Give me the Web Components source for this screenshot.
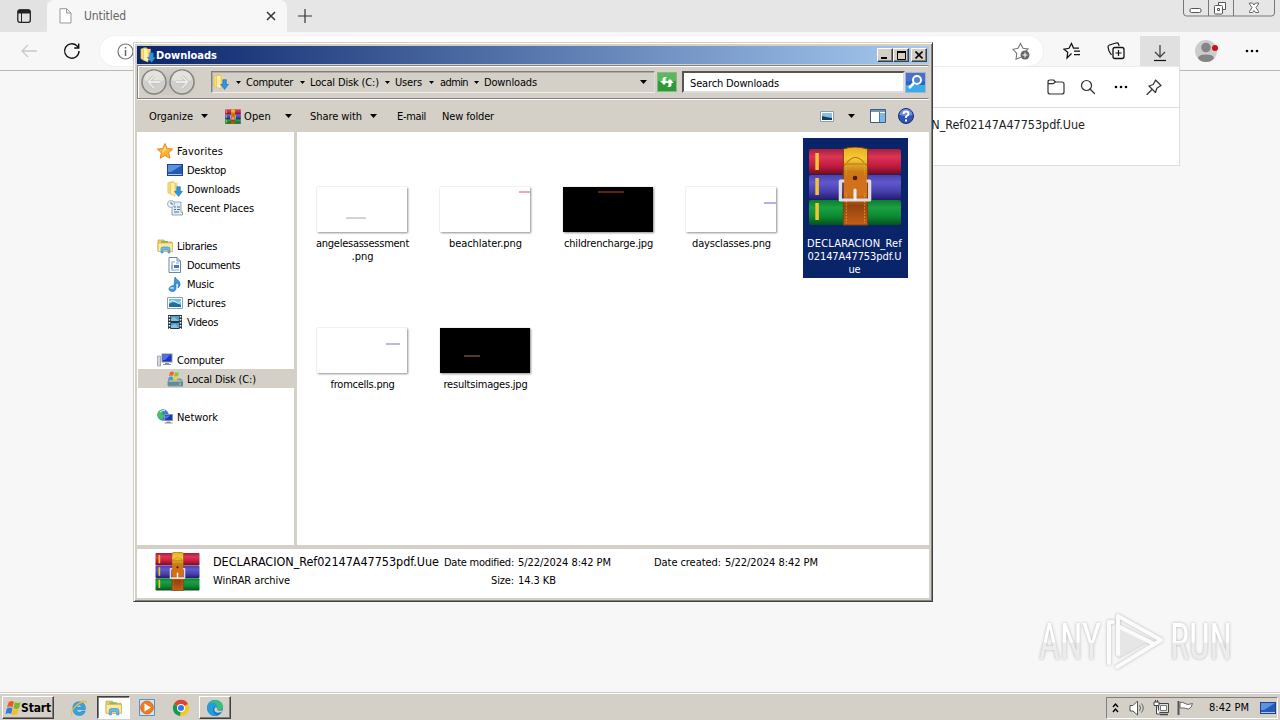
<!DOCTYPE html>
<html lang="en"><head><meta charset="utf-8"><title>Downloads</title>
<style>
html,body{margin:0;width:1280px;height:720px;overflow:hidden}
body{font:11px/13px "DejaVu Sans Condensed","DejaVu Sans","Liberation Sans",sans-serif;font-stretch:condensed;color:#000}
</style></head><body>
<desktop-shell></desktop-shell>
<script>
const folder='<path d="M1 2l6-1.500v14l-6-2z" fill="#f9dc7b" stroke="#d9ad3d" stroke-width=".6"/><path d="M3 2h9v12H3z" fill="#f6d676"/><path d="M4 1l5 1v14l-5-2z" fill="#fff0a9" stroke="#dfb64b" stroke-width=".6"/>';
const lib='<path d="M1 2h6l1 2h7v9H1z" fill="#f3ce68" stroke="#c79a35" stroke-width=".7"/><path d="M4 3h7v3H4z" fill="#7fbf66"/><path d="M1 5h14.500v8.500H1z" fill="#fbe9a0" stroke="#d3ab4a" stroke-width=".7"/><path d="M4 15v-4q0-2 2-2h5q2 0 2 2v4h-2v-3H6v3z" fill="#6db8e8" stroke="#3b87bd" stroke-width=".6"/>';
const mon=(x,y,w,h)=>`<rect x="${x}" y="${y}" width="${w}" height="${h}" fill="#1c36c4" stroke="#8b93a5"/><path d="M${x+1} ${y+1}h${w-3}l-${w/2} ${h-3}h-2z" fill="#4c72ee"/><path d="M${x+w/2-2} ${y+h+1}h4v1h2v1h-8v-1h2z" fill="#8b8f96"/>`;
const rar=`<defs><linearGradient id="r" x2="0" y2="1"><stop stop-color="#a3203c"/><stop offset=".3" stop-color="#dd3556"/><stop offset=".65" stop-color="#c41c40"/><stop offset="1" stop-color="#6c0d24"/></linearGradient><linearGradient id="b" x2="0" y2="1"><stop stop-color="#4a42ac"/><stop offset=".3" stop-color="#6057cc"/><stop offset=".65" stop-color="#4a41b0"/><stop offset="1" stop-color="#251d70"/></linearGradient><linearGradient id="g" x2="0" y2="1"><stop stop-color="#0f7a2e"/><stop offset=".3" stop-color="#1ba044"/><stop offset=".65" stop-color="#0c8a31"/><stop offset="1" stop-color="#055020"/></linearGradient><linearGradient id="o" x2="0" y2="1"><stop stop-color="#e9ad18"/><stop offset=".15" stop-color="#f6cb38"/><stop offset=".32" stop-color="#c77a16"/><stop offset=".6" stop-color="#d9761a"/><stop offset=".75" stop-color="#94430d"/><stop offset="1" stop-color="#c35f19"/></linearGradient></defs>
<rect x="1" y="2" width="91" height="25.500" rx="2" fill="url(#r)"/><rect x="1" y="28" width="91" height="24.500" rx="2" fill="url(#b)"/><rect x="1" y="53" width="91" height="25" rx="2" fill="url(#g)"/><path d="M9 6v17M9 31v17M9 56v17" stroke="#f3c332" stroke-width="3.500"/><path d="M35 2q11-4 24 0v76H35z" fill="url(#o)" stroke="#7d430d" stroke-width="1"/><path d="M36 19q11-17 22 0M36 17h22" fill="none" stroke="#b8760f" stroke-width="1"/><path d="M38 3v73M56 3v73" stroke="#f0ad41" stroke-width=".6" stroke-dasharray="2 1"/><path d="M36 34h-4v19h29V34h-4" fill="none" stroke="#dcdce2" stroke-width="3.200" stroke-linejoin="round"/><path d="M36 28h22v17q-11 8-22 0z" fill="#d3711a"/><circle cx="46.500" cy="31" r="2.300" fill="#492004"/><path d="M46.500 43v9" stroke="#f2f2f5" stroke-width="3" stroke-linecap="round"/>`;
const dl=folder+'<path d="M11 6h4v5h2.500L13 16.500 8.500 11H11z" fill="#2d96e2" stroke="#176bb0" stroke-width=".6"/>';
const S='fill="none" stroke="#333" stroke-width="1.200" stroke-linecap="round" stroke-linejoin="round"';
const ICONS={
 downloads:['0 0 18 17',dl],rar:['0 0 93 79',rar],libraries:['0 0 16 16',lib],
 star:['0 0 16 16','<path d="M8 .5l2.300 5 5.400.6-4 3.700 1.200 5.500L8 12.500l-4.800 2.800 1.100-5.500-4-3.700 5.400-.6z" fill="#ffb52e" stroke="#d9761c" stroke-width=".8"/><path d="M8 3l1.500 3.500L5 10z" fill="#ffe08a"/>'],
 desktop:['0 0 16 16','<path d="M0 2h16v12H0z" fill="#20418f"/><path d="M1 3h14v9H1z" fill="#2459b4"/><path d="M1 3h14L4 10H1z" fill="#5a94df"/><path d="M1 12.500h14" stroke="#a7c6ee"/>'],
 recent:['0 0 16 16','<path d="M4 2h10v10h1.500v3H5V5H3z" fill="#e4eef6" stroke="#7d8fa1" stroke-width=".8"/><circle cx="4" cy="4" r="3.500" fill="#eef4fa" stroke="#899ab0" stroke-width=".8"/><path d="M4 2v2h2M7 7h2m1 0h3M7 9.500h2m1 0h3M7 12h5" stroke="#50719a" fill="none"/>'],
 document:['0 0 16 16','<path d="M2 .5h8l3.500 3.500v11.500H2z" fill="#fff" stroke="#6e87a5"/><path d="M10 .5V4h3.500" fill="none" stroke="#6e87a5"/><path d="M4 5h4M4 7h2m3-1h3M4 13h8" stroke="#7ba0cc"/><path d="M7 8h5v3H7z" fill="#387cc4"/><path d="M4 9h2m-2 2h2" stroke="#555"/>'],
 music:['0 0 16 16','<path d="M8 1c1 3 5 3 5 7 0 2-1 3-2 4 1-3 0-5-2-5v5c0 5-7 4-7 1 0-2 3-4 5-3z" fill="#3a99dc" stroke="#1b6fb3" stroke-width=".7"/><ellipse cx="5" cy="12" rx="2" ry="1" fill="#a9dafa"/>'],
 pictures:['0 0 16 16','<path d="M.5 2.500h15v11H.5z" fill="#fff" stroke="#8aa3b9"/><path d="M2 4h12v8H2z" fill="#70bfe8"/><path d="M2 9q5-4 12 1v2H2z" fill="#256f96"/><path d="M2 7q4-3 7 0t5-1" fill="none" stroke="#e4f6ff"/>'],
 videos:['0 0 16 16','<path d="M1 1h14v14H1z" fill="#2c343f"/><path d="M4 2h8v5H4zM4 9h8v5H4z" fill="#4f9ed0"/><path d="M4 5l3-2 5 4H4zM4 12l4-2 4 4H4z" fill="#7bc1e6"/><path d="M2.500 2v13M13.500 2v13" stroke="#fff" stroke-width="1.500" stroke-dasharray="1.500 1.500"/>'],
 computer:['0 0 16 16','<path d="M.5 4h3v10h-3z" fill="#d5d9df" stroke="#8a8f98" stroke-width=".7"/>'+mon(5,2,10,8)],
 disk:['0 0 16 16','<path d="M1 10l2-2h11l2 3v4H1z" fill="#9eb3ba" stroke="#5a7580" stroke-width=".7"/><path d="M1 11h15v3.500H1z" fill="#5c8d99"/><path d="M12 13h2" stroke="#8f8"/><path d="M3 1q2-1 4 0L6 5q-2-1-4 0z" fill="#f06529"/><path d="M8 1q2 1 4 0l-1 4q-2 1-4 0z" fill="#8cc63f"/><path d="M2 6q2-1 4 0l-1 3q-2-1-4 0z" fill="#2ba2e5"/><path d="M7 6q2 1 4 0l-1 3q-2 1-4 0z" fill="#ffc923"/>'],
 network:['0 0 16 16','<circle cx="6" cy="6" r="5.700" fill="#2f87c6"/><path d="M2 2q3-2 5-1L5 5l2 2-2 4Q1 9 0 6z" fill="#4bbd64"/><path d="M3 3q3-3 5-1" stroke="#d0f0ff" fill="none"/>'+mon(7.5,5.5,8,6)],
 pane:['0 0 16 14','<path d="M.5.500h15v13H.5z" fill="#fff" stroke="#3e5c80"/><path d="M1 1h14v2H1z" fill="#7794b6"/><path d="M10 4h5v9h-5z" fill="#7fb9e7"/><path d="M9.500 3v10" stroke="#50779f"/>'],
 view:['0 0 14 11','<path d="M.5.500h13v10H.5z" fill="#fff" stroke="#8a9eb1"/><path d="M2 2h10v7H2z" fill="#86c0e4"/><path d="M2 5l4 1 6 1v2H2z" fill="#173a60"/>'],
 help:['0 0 16 16','<circle cx="8" cy="8" r="7.500" fill="#3054b8" stroke="#193078"/><path d="M1.500 7a6.500 6 0 0113 0q-6 2-13 0z" fill="#6d8fe0"/><path d="M5.500 6q0-2.500 2.500-2.500t2.500 2.300Q10.500 7.500 8 8.500v1.500" fill="none" stroke="#fff" stroke-width="1.800"/><path d="M7 11.500h2v2H7z" fill="#fff"/>'],
 refresh:['0 0 20 20','<path d="M.5.500h19v19H.5z" fill="#2c9a35" stroke="#8fb48e"/><path d="M1 1h18v8H1z" fill="#58b95a"/><path d="M3 9l4 4 4-4H8.500Q8 6 10 5H7Q5 6 5.500 9z" fill="#fff"/><path d="M9 11l4-4 4 4h-2.500q.5 3-1.500 4h-3q2-1 1.500-4z" fill="#fff"/>'],
 search:['0 0 21 21','<path d="M.5.500h20v20H.5z" fill="#2766cc" stroke="#a6b5d1"/><path d="M1 13h19v7H1z" fill="#3cabe9"/><path d="M1 1h19v8H1z" fill="#4871c8"/><circle cx="12" cy="8" r="4" fill="#4d83d8" stroke="#fff" stroke-width="2"/><path d="M9 11l-5 5" stroke="#fff" stroke-width="2.700"/>'],
 navback:['0 0 26 26','<circle cx="13" cy="13" r="12" fill="#cfcecb" stroke="#85837d" stroke-width="1.500"/><path d="M3 11a10 9.500 0 0120 0q-9 4-20 0z" fill="#e4e2df"/><path d="M13 7l-5.500 6 5.500 6M8 13h11" stroke="#c0beb9" stroke-width="3.200" fill="none"/><path d="M13 7l-5.500 6 5.500 6M8 13h11" stroke="#ecebe8" stroke-width="1.800" fill="none"/>'],
 tabs:['0 0 16 16','<rect x="1.800" y="1.800" width="12.500" height="12.500" rx="2" fill="none" stroke="#222" stroke-width="1.300"/><path d="M2 3q0-1.500 1.500-1.500h9q1.500 0 1.500 1.500v2.500H2z" fill="#222"/><path d="M5.500 5v9" stroke="#222"/>'],
 page:['0 0 13 16',`<path d="M1 .700h6.500L12 5v10H1zM7.500.700V5H12" fill="#fff" stroke="#999"/>`],
 close:['0 0 10 10',`<path d="M1 1l8 8M9 1L1 9" stroke="#333" stroke-width="1.500"/>`],
 plus:['0 0 14 14',`<path d="M7 0v14M0 7h14" stroke="#333" stroke-width="1.200"/>`],
 back:['0 0 18 16',`<path d="M8 2L2 8l6 6M2 8h15" fill="none" stroke="#c9c9c9" stroke-width="1.300"/>`],
 reload:['0 0 18 18',`<path d="M16 9a7.200 7.200 0 11-2.200-5.200L15.500 5.500M15.700 1.500V6h-4.500" fill="none" stroke="#111" stroke-width="1.400"/>`],
 info:['0 0 17 17',`<circle cx="8.500" cy="8.500" r="7.500" fill="none" stroke="#777" stroke-width="1.200"/><path d="M8.500 7v6M8.500 4v1.600" stroke="#666" stroke-width="1.500"/>`],
 favadd:['0 0 18 18','<path d="M9 15.200l-5 2 .8-5.700L1 7.300l5-1L8.500 1.500l2.500 4.800 5 .7-2 2" fill="none" stroke="#777" stroke-width="1.100"/><circle cx="13" cy="13" r="4.500" fill="#666"/><path d="M13 10.500v5M10.500 13h5" stroke="#fff"/>'],
 favs:['0 0 18 18',`<path d="M8.500 11.500L4 16l.7-5.700L1 7.200l5-.9L8.500 1.500l2 4.500H16M11 9h6M11 12.500h6" fill="none" stroke="#111" stroke-width="1.250"/>`],
 coll:['0 0 18 18','<path d="M4.500 13L2 9 1 5q0-1.500 1.500-2L9 1q2-.4 2.500 1l.6 2" fill="none" stroke="#111" stroke-width="1.200"/><rect x="6" y="5.500" width="11" height="11" rx="2" fill="#f7f7f7" stroke="#111" stroke-width="1.300"/><path d="M11.500 8v6M8.500 11h6" stroke="#111" stroke-width="1.200"/>'],
 down:['0 0 16 18','<path d="M8 1v12M3 8l5 5 5-5" fill="none" stroke="#444" stroke-width="1.300"/><path d="M2 16.500h12" stroke="#111" stroke-width="1.200"/>'],
 avatar:['0 0 24 24','<circle cx="11" cy="12" r="11" fill="#ccc"/><circle cx="11" cy="8.500" r="4.800" fill="#858585"/><path d="M3 19.500q0-4 8-4t8 4q-3 3.500-8 3.500t-8-3.500z" fill="#858585"/><circle cx="20" cy="9" r="3" fill="#d50b18"/>'],
 dots:['0 0 14 4','<circle cx="2" cy="2" r="1.300"/><circle cx="7" cy="2" r="1.300"/><circle cx="12" cy="2" r="1.300"/>'],
 ofolder:['0 0 18 16',`<path d="M1 4V3q0-2 2-2h3.500l2 2H15q2 0 2 2v8q0 2-2 2H3q-2 0-2-2zM1 4.700h5L8.500 3" ${S}/>`],
 lens:['0 0 16 16',`<circle cx="6.500" cy="6.500" r="5" ${S}/><path d="M10 10l4.500 4.500" ${S}/>`],
 pin:['0 0 16 16',`<path d="M9.500 1l5.500 5.500-1.500 1-2.700 1.800-1.300 4.200-6.500-6.500 4.200-1.500 1.500-2.800zM6 10.500l-5 5" ${S}/>`],
 wctl:['0 0 92 17','<path d="M.5 0v13q0 3 3 3h85q3 0 3-3V0M25.500 0v16M50.500 0v16" fill="none" stroke="#777"/><rect x="7" y="8.500" width="11" height="4" rx="1.500" fill="#fff" stroke="#555"/><path d="M35.500 5.500V2.500h7v7h-3" fill="#fff" stroke="#555"/><rect x="31.500" y="5.500" width="8" height="8.500" rx="1" fill="#fff" stroke="#555"/><path d="M34.500 8.500h2v2h-2z" fill="none" stroke="#555"/><path d="M66.500 3h3l1.500 2 1.500-2h3v1l-2.500 3.500 2.500 4v1h-3l-1.500-2-1.500 2h-3v-1l2.500-4-2.500-3.500z" fill="#fff" stroke="#555" stroke-width=".9"/>'],
 flag:['0 0 17 17','<path d="M4 2q3-2 5.500 0L8 8Q5 6 2 8z" fill="#ee5a24"/><path d="M10.500 2.500q3 1.500 6 0L15 8.500q-3 2-6 0z" fill="#76b72b"/><path d="M2 9q3-2 6 0l-1.500 6Q4 13 .500 15z" fill="#2b7fda"/><path d="M8.500 9.500q3 1.500 6 0L13 15q-3 2-6 .5z" fill="#fbbd16"/>'],
 ie:['0 0 18 18','<path d="M15.500 10.500H6.500q.3 2.800 3 2.800 1.700 0 2.500-1.300h3.200q-1.300 4.500-5.900 4.500-6.500-.5-6.500-7t6.700-6.800q6 .3 6 7.800zM6.500 8.300h5.200q-.4-2.300-2.600-2.300t-2.600 2.300z" fill="#2fa4e7" stroke="#187bbd" stroke-width=".5"/><path d="M1.500 16.500Q-.5 12 6 6q7-6 10.500-4 1 1-.2 3 0-3-3.300-1.500Q8 5 4 10q-4 5-1 5.500" fill="#f2b938"/>'],
 media:['0 0 16 17','<path d="M.5.500h15v16H.5z" fill="#cfe4f5" stroke="#5793c4"/><circle cx="8" cy="8.500" r="6.400" fill="#f47b16" stroke="#bb5309" stroke-width=".6"/><path d="M5.500 4.500v8l6.500-4z" fill="#fff"/>'],
 chrome:['0 0 18 18','<circle cx="9" cy="9" r="8" fill="#f8c81c"/><path d="M9 9L2 5A8 8 0 0116 5z" fill="#db4437"/><path d="M9 9L2 5a8 8 0 006 12z" fill="#159957"/><circle cx="9" cy="9" r="4" fill="#fff"/><circle cx="9" cy="9" r="3" fill="#3578e5"/>'],
 edge:['0 0 18 18','<circle cx="9" cy="9" r="8" fill="#1474c4"/><path d="M1.500 7Q3 1 9.500 1 17 2 17 8q-.5 4-5 3.500-2-.5-1-2Q10 5 5.500 5.500 2 6 1 9z" fill="#38bd82"/><path d="M1 9q1-6 7-5 3 .5 3 4-4-1-4 3 .5 4 5 5.500-9 2-11-7.500z" fill="#219edb"/><path d="M17 10.500q-2 2-5 1-1.500-.5-.7-2l-1.500-1.500q-2.300 1.500-1.300 3.700Q10 15 15.500 13z" fill="#d4d0c8"/>'],
 sound:['0 0 17 16','<path d="M1 5.500h3L8.500 1v14L4 11H1z" fill="#fff" stroke="#555"/><path d="M10.500 5q2 3 0 6M12.500 3.500q3.500 4.500 0 9" fill="none" stroke="#666"/>'],
 net:['0 0 17 16','<path d="M5.500 3.500h10v9h-10z" fill="#ddd" stroke="#444"/><path d="M7.500 5.500h6v5h-6z" fill="#fff" stroke="#777"/><path d="M7 14.500h8" stroke="#444" stroke-width="1.500"/><path d="M1 2v3.500h5V2zM2.500 0v2M4.500 0v2M3.500 6v8H7" fill="#fff" stroke="#444"/>'],
 tflag:['0 0 17 16','<path d="M1.500 1v14" stroke="#555" stroke-width="2"/><path d="M3 2.500q3-1 5 1t7.500 0q-1 5-4 5.500-3-.500-4.500-1H3z" fill="#fff" stroke="#666"/>'],
 chev:['0 0 7 12','<path d="M1 5l2.500-3L6 5M1 10l2.500-3L6 10" fill="none" stroke="#000" stroke-width="1.400"/>'],
 tri:['0 0 7 4','<path d="M0 0h7L3.500 4z"/>'],
 min:['0 0 8 8','<path d="M0 6h6v2H0z"/>'],max:['0 0 9 9','<path d="M.5.500h8v8h-8z" fill="none" stroke="#000"/><path d="M0 1h9" stroke="#000" stroke-width="2"/>'],
 x:['0 0 8 8','<path d="M.5.500l7 7M7.500.500l-7 7" stroke="#000" stroke-width="1.600"/>']
};
const define=(name,css,html)=>customElements.define(name,class extends HTMLElement{
 connectedCallback(){ if(this.shadowRoot)return; this.attachShadow({mode:'open'}).innerHTML=`<style>*{box-sizing:border-box}:host{box-sizing:border-box}${css}</style>`+(typeof html==='function'?html(this):html); }
});
/* Text run spread over a given width */
customElements.define('ui-text',class extends HTMLElement{
 connectedCallback(){
  if(this.shadowRoot)return;
  const w=+this.getAttribute('w');
  this.attachShadow({mode:'open'}).innerHTML='<style>:host{display:block;flex:none;white-space:pre}span{display:inline-block}</style><span><slot></slot></span>';
  const s=this.shadowRoot.querySelector('span'),n=this.textContent.length;
  if(w){const d=(w-s.getBoundingClientRect().width)/n;s.style.letterSpacing=d+'px';this.style.width=w+'px';}
 }});
define('ui-icon',':host{display:block;flex:none}svg{display:block}',e=>{
 const [vb,p]=ICONS[e.getAttribute('name')],v=vb.split(' ');
 return `<svg width="${e.getAttribute('w')||v[2]}" height="${e.getAttribute('h')||v[3]}" viewBox="${vb}" preserveAspectRatio="none">${p}</svg>`;});
const I=(n,w,h,st)=>`<ui-icon name="${n}"${w?` w="${w}" h="${h}"`:''}${st?` style="${st}"`:''}></ui-icon>`;
const T=(t,w,st)=>`<ui-text w="${w}"${st?` style="${st}"`:''}>${t}</ui-text>`;
const M=n=>`margin-left:${n}px`;

define('edge-tabs',`:host{display:flex;height:32px;background:#e6e6e6}.l{width:47px;padding:8px 0 0 16px;background:#e2e2e2;border-radius:0 0 6px 0}.t{width:240px;background:#f7f7f7;border-radius:7px 7px 0 0;display:flex;align-items:center;padding:0 11px 0 12px;color:#666;font:12px "DejaVu Sans Condensed"}.p{margin:9px 0 0 11px}.w{margin-left:auto;padding-right:5px}`,
`<div class="l">${I('tabs')}</div><div class="t">${I('page')}${T('Untitled',42,M(12))}${I('close',10,10,'margin-left:auto')}</div><div class="p">${I('plus')}</div><div class="w">${I('wctl')}</div>`);
define('edge-toolbar',`:host{display:flex;height:39px;background:#f7f7f7;border-bottom:1px solid #b9b9b9;padding-left:20px;align-items:center}.pill{width:943px;height:30px;border-radius:15px;background:#fff;box-shadow:0 0 0 1px #f1f1f1;margin-left:19px;display:flex;align-items:center;justify-content:space-between;padding:0 13px 0 17px}.d{width:40px;height:34px;align-self:flex-start;margin:4px 0 0 15px;background:#e0e0e0;display:grid;place-items:center}`,
`${I('back')}${I('reload',0,0,M(25))}<div class="pill">${I('info')}${I('favadd')}</div>${I('favs',0,0,M(20))}${I('coll',0,0,M(26))}<div class="d">${I('down',16,18)}</div>${I('avatar',0,0,M(15))}${I('dots',0,0,M(26))}`);
define('download-flyout',`:host{display:block;position:absolute;left:820px;top:66px;width:360px;height:100px;background:#fff;border:1px solid #ddd;border-top-color:#ececec}.h{height:41px;display:flex;justify-content:flex-end;align-items:center;border-bottom:1px solid #ddd;padding-right:17px}.n{display:flex;justify-content:flex-end;padding:9px 94px 0 0;font-size:12.5px;line-height:15px;color:#222}`,
`<div class="h">${I('ofolder')}${I('lens',0,0,M(15))}${I('dots',0,0,M(18))}${I('pin',0,0,M(18))}</div><div class="n">${T('DECLARACION_Ref02147A47753pdf.Uue',226)}</div>`);
define('any-mark',':host{display:block;position:absolute;left:1030px;top:604px}svg{display:block;filter:drop-shadow(0 0 1.500px #b4b4b4)}',
`<svg width="250" height="80"><defs><linearGradient id="f" x2="0" y2="1"><stop offset=".5" stop-color="#fff"/><stop offset=".52" stop-color="#ececec"/></linearGradient></defs><g font-family="Roboto" font-size="50" fill="url(#f)"><text x="9" y="55" textLength="62" lengthAdjust="spacingAndGlyphs">ANY</text><text x="140" y="55" textLength="62" lengthAdjust="spacingAndGlyphs">RUN</text></g><path d="M88 22l32 14-32 18z" fill="#e6e6e6"/><path d="M79 59V18h4M88 50V12l43 24-44 27M88 22l36 18" fill="none" stroke="#fbfbfb" stroke-width="4" stroke-linecap="round" stroke-linejoin="round"/></svg>`);
define('title-bar',`:host{display:flex;height:18px;background:linear-gradient(90deg,#0a246a,#a6caf0);color:#fff;font:bold 11px "DejaVu Sans Condensed";align-items:center;padding:0 2px 0 3px}.b{width:16px;height:14px;background:#d4d0c8;border:1px solid;border-color:#fff #404040 #404040 #fff;box-shadow:inset -1px -1px #808080;display:grid;place-items:center}.b:last-child{margin-left:2px}`,
`${I('downloads',16,16)}${T('Downloads',61,'font-stretch:condensed;flex:1')}<div class="b">${I('min',8,8)}</div><div class="b">${I('max',9,9)}</div><div class="b">${I('x',8,8)}</div>`);
define('address-bar',`:host{display:flex;height:34px;margin-top:1px;border:1px solid #808080;border-color:#808080 #d4d0c8 #808080 #808080;box-shadow:inset 1px 1px #fff,0 1px #fff;align-items:center;padding:0 0 0 3px}.c{width:444px;height:22px;margin-left:16px;border:1px solid #808080;border-color:#808080 #ddd #eee #808080;box-shadow:inset 1px 1px #aaa;display:flex;align-items:center;padding-left:1px}ui-text{position:relative;top:.5px}.s{width:223px;height:22px;margin-left:5px;background:#fff;border:2px solid;border-color:#555 #ddd #ddd #555;padding:3px 0 0 6px}.n{display:flex;background:radial-gradient(#c4c1bb,#d4d0c8);gap:2px}`,
`<div class="n">${I('navback')}${I('navback',0,0,'transform:scaleX(-1)')}</div><div class="c">${I('downloads',16,16)}${[['Computer',47,7,5],['Local Disk (C:)',69,7,5],['Users',27,6,5],['admin',28,7,6],['Downloads',53,6,5]].map(a=>I('tri',5,3,M(a[2]))+T(a[0],a[1],M(a[3]))).join('')}${I('tri',7,4,'margin-left:auto;margin-right:7px')}</div>${I('refresh',0,0,M(2))}<div class="s">${T('Search Downloads',89)}</div>${I('search',0,0,M(0))}`);
define('command-bar',`:host{display:flex;height:33px;flex:none;align-items:center;padding:1px 15px 0 12px}`,
`${T('Organize',44)}${I('tri',7,4,M(8))}${I('rar',16,15,M(17))}${T('Open',27,M(3))}${I('tri',7,4,M(14))}${T('Share with',52,M(18))}${I('tri',7,4,M(8))}${T('E-mail',29,M(20))}${T('New folder',52,M(16))}${I('view',0,0,'margin-left:auto')}${I('tri',7,4,M(14))}${I('pane',0,0,M(15))}${I('help',0,0,M(12))}`);
define('nav-item',`:host{display:flex;height:19px;align-items:center;padding-left:19px;gap:4px;margin-left:1px}:host([sub]){padding-left:29px}:host([on]){background:#d4d0c8}:host([gap]){margin-top:19px}ui-text{padding-top:2px}`,
e=>`${I(e.getAttribute('icon'),16,16)}${T(e.textContent,e.getAttribute('w'))}`);
const N=(t,i,w,a='')=>`<nav-item icon="${i}" w="${w}" ${a}>${t}</nav-item>`;
define('side-nav',':host{display:block;width:157px;background:#fff;padding-top:9px}',
[['Favorites','star',46],['Desktop','desktop',39,'sub'],['Downloads','downloads',53,'sub'],['Recent Places','recent',67,'sub'],['Libraries','libraries',40,'gap'],['Documents','document',53,'sub'],['Music','music',27,'sub'],['Pictures','pictures',39,'sub'],['Videos','videos',31,'sub'],['Computer','computer',47,'gap'],['Local Disk (C:)','disk',69,'sub on'],['Network','network',41,'gap']].map(a=>N(...a)).join(''));
define('file-tile',`:host{display:flex;flex-direction:column;align-items:center;height:140px;padding:3px 2px 0 0}:host([on]){background:#0a246a;color:#fff}.i{height:96px;width:100%;display:flex;justify-content:center;align-items:flex-end;padding-bottom:5px}.t{width:90px;height:45px;background:#fff;box-shadow:0 0 1px #ccc,1px 1px 2px #888;overflow:hidden;margin-right:1px}.t.k{background:#000}.m{height:2px;opacity:.5}:host([on]) .i{padding-bottom:11px}`,
e=>{const g=k=>e.getAttribute(k),m=(g('mark')||'').split(' ');
 return `<div class="i">${e.hasAttribute('on')?I('rar',94,79):`<div class="t ${e.hasAttribute('dark')?'k':''}"><div class="m" style="margin:${m[1]}px 0 0 ${m[0]}px;width:${m[2]}px;background:${m[3]}"></div></div>`}</div>`+g('lines').split('|').map(l=>{const[a,b]=l.split('~');return T(a,b)}).join('')});
define('file-grid',':host{flex:1;background:#fff;display:grid;grid-template-columns:repeat(5,105px);grid-auto-rows:140px;gap:1px 18px;padding:6px 0 0 14px;align-content:start}',
`<file-tile lines="angelesassessment~93|.png~22" mark="29 30 20 #aaa"></file-tile><file-tile lines="beachlater.png~73" mark="79 4 11 #e34b70"></file-tile><file-tile dark lines="childrencharge.jpg~89" mark="35 4 26 #b5491e"></file-tile><file-tile lines="daysclasses.png~79" mark="78 15 12 #6860d8"></file-tile><file-tile on lines="DECLARACION_Ref~95|02147A47753pdf.U~94|ue~12"></file-tile><file-tile lines="fromcells.png~64" mark="69 15 14 #7770c8"></file-tile><file-tile dark lines="resultsimages.jpg~84" mark="24 27 16 #b5743e"></file-tile>`);
define('details-pane',':host{display:flex;height:49px;flex:none;background:#fff;padding:3px 0 0 18px}.g{display:grid;grid-template-columns:231px 70px 140px 67px 97px;grid-auto-rows:18px;align-items:center;margin:1px 0 0 13px;height:36px}.v{padding-left:4px}.r{justify-self:end}',
`${I('rar',45,39)}<div class="g">${T('DECLARACION_Ref02147A47753pdf.Uue',226,'font-size:12.5px;margin-top:-2px')}${T('Date modified:',70)}<div class="v">${T('5/22/2024 8:42 PM',93)}</div>${T('Date created:',67)}<div class="v">${T('5/22/2024 8:42 PM',93)}</div>${T('WinRAR archive',77)}<div class="r">${T('Size:',23)}</div><div class="v">${T('14.3 KB',38)}</div></div>`);
define('explorer-window',':host{position:absolute;left:133px;top:42px;width:800px;height:560px;background:#d4d0c8;border:1px solid;border-color:#d4d0c8 #404040 #404040 #d4d0c8;box-shadow:inset 1px 1px #fff,inset -1px -1px #808080;padding:3px;display:flex;flex-direction:column}.b{flex:1;display:flex}.b file-grid{margin-left:3px}details-pane{margin-top:4px}',
`<title-bar></title-bar><address-bar></address-bar><command-bar></command-bar><div class="b"><side-nav></side-nav><file-grid></file-grid></div><details-pane></details-pane>`);
define('task-bar',`:host{display:flex;height:28px;background:#d4d0c8;border-top:1px solid #d4d0c8;box-shadow:inset 0 1px #fff;padding:3px 2px 1px;align-items:center}.r,.p{height:23px;display:flex;align-items:center;justify-content:center;border:1px solid;border-color:#fff #404040 #404040 #fff;box-shadow:inset -1px -1px #808080}.p{background:#fff;border-color:#404040 #fff #fff #404040;box-shadow:inset 1px 1px #808080}.st{width:52px;font:bold 12px "DejaVu Sans Condensed";font-stretch:condensed;gap:0}.tray{margin-left:auto;width:172px;height:22px;border:1px solid;border-color:#808080 #fff #fff #808080;display:flex;align-items:center;padding-left:5px}`,
`<div class="r st">${I('flag',16,16)}${T('Start',30)}</div>${I('ie',0,0,M(16))}<div class="p" style="width:33px;margin-left:9px">${I('libraries',17,17)}</div>${I('media',0,0,M(9))}${I('chrome',0,0,M(17))}<div class="r" style="width:32px;margin-left:9px">${I('edge')}</div><div class="tray">${I('chev')}${I('sound',0,0,M(10))}${I('net',0,0,M(7))}${I('tflag',0,0,M(7))}${T('8:42 PM',40,M(15))}${I('desktop',16,16,M(11))}</div>`);
define('edge-browser',':host{display:block;flex:1;background:#f7f7f7}','<edge-tabs></edge-tabs><edge-toolbar></edge-toolbar><download-flyout></download-flyout><any-mark></any-mark>');
define('desktop-shell',':host{display:flex;flex-direction:column;position:relative;width:1280px;height:720px;overflow:hidden}','<edge-browser></edge-browser><task-bar></task-bar><explorer-window></explorer-window>');
</script></body></html>
